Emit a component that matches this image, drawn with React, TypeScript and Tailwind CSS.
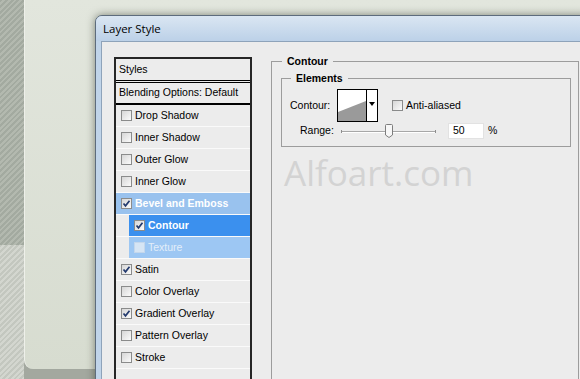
import React from 'react';

type RowKind = 'plain' | 'parent' | 'subActive' | 'sub';

interface StyleRow {
  label: string;
  checked: boolean;
  kind: RowKind;
}

const rows: StyleRow[] = [
  { label: 'Drop Shadow', checked: false, kind: 'plain' },
  { label: 'Inner Shadow', checked: false, kind: 'plain' },
  { label: 'Outer Glow', checked: false, kind: 'plain' },
  { label: 'Inner Glow', checked: false, kind: 'plain' },
  { label: 'Bevel and Emboss', checked: true, kind: 'parent' },
  { label: 'Contour', checked: true, kind: 'subActive' },
  { label: 'Texture', checked: false, kind: 'sub' },
  { label: 'Satin', checked: true, kind: 'plain' },
  { label: 'Color Overlay', checked: false, kind: 'plain' },
  { label: 'Gradient Overlay', checked: true, kind: 'plain' },
  { label: 'Pattern Overlay', checked: false, kind: 'plain' },
  { label: 'Stroke', checked: false, kind: 'plain' },
];

const CheckBox = ({ checked, faded }: { checked: boolean; faded?: boolean }) => (
  <span
    className={`w-[11px] h-[11px] shrink-0 border flex items-center justify-center ${
      faded
        ? 'border-[#c4d7ec] bg-[#d6e5f4]'
        : 'border-[#8a8b8b] bg-gradient-to-br from-[#d6d6d6] to-[#fbfbfb]'
    }`}
  >
    {checked && (
      <svg width="9" height="9" viewBox="0 0 9 9">
        <path d="M1.5 4.5 L3.5 6.8 L7.5 1.8" fill="none" stroke="#233a6e" strokeWidth="1.7" />
      </svg>
    )}
  </span>
);

const ListRow = ({ row }: { row: StyleRow }) => {
  if (row.kind === 'subActive' || row.kind === 'sub') {
    const active = row.kind === 'subActive';
    return (
      <div className="flex h-[22px] border-b border-[#fafafa]">
        <div className="w-[13px] bg-[#ececec]" />
        <div
          className={`flex-1 flex items-center pl-[5px] ${
            active ? 'bg-[#3b90ee] text-white font-bold' : 'bg-[#9dc7f3] text-[#e3eef9]'
          }`}
        >
          <CheckBox checked={row.checked} faded={!active} />
          <span className="ml-[3px]">{row.label}</span>
        </div>
      </div>
    );
  }
  const parent = row.kind === 'parent';
  return (
    <div
      className={`flex items-center h-[22px] pl-[5px] border-b border-[#fafafa] ${
        parent ? 'bg-[#99c2ee] text-white font-bold' : 'text-black'
      }`}
    >
      <CheckBox checked={row.checked} />
      <span className="ml-[3px]">{row.label}</span>
    </div>
  );
};

const ContourPreview = () => (
  <div className="w-[41px] h-[33px] border border-black bg-white flex">
    <svg width="28" height="31" viewBox="0 0 28 31" className="block">
      <polygon points="0,31 0,22 28,11 28,31" fill="#9a9a9a" />
    </svg>
    <div className="flex-1 border-l border-black flex justify-center pt-[12px]">
      <svg width="6" height="4" viewBox="0 0 6 4">
        <polygon points="0,0 6,0 3,4" fill="#000" />
      </svg>
    </div>
  </div>
);

const RangeSlider = () => (
  <svg width="97" height="16" viewBox="0 0 97 16" className="block">
    <line x1="1" y1="8.5" x2="96" y2="8.5" stroke="#a7a7a7" />
    <line x1="1" y1="9.5" x2="96" y2="9.5" stroke="#ffffff" />
    <line x1="1.5" y1="7" x2="1.5" y2="10" stroke="#8d8d8d" />
    <line x1="95.5" y1="7" x2="95.5" y2="10" stroke="#8d8d8d" />
    <path d="M45.5 2.5 Q45.5 1.5 46.5 1.5 L51.5 1.5 Q52.5 1.5 52.5 2.5 L52.5 12 L49 14.5 L45.5 12 Z" fill="#f7f7f7" stroke="#7d7d7d" />
  </svg>
);

export default function App() {
  return (
    <div className="relative w-[580px] h-[379px] overflow-hidden font-['Liberation_Sans',Arial,sans-serif] text-[10.5px]">
      <div className="flex h-full">
        <div className="w-[24px] flex flex-col">
          <div className="h-[245px] bg-[repeating-linear-gradient(135deg,#a3aaa0_0px,#a3aaa0_2px,#b3b9af_2px,#b3b9af_4px)]" />
          <div className="flex-1 bg-[repeating-linear-gradient(135deg,#c3c7bf_0px,#c3c7bf_2px,#d3d6cf_2px,#d3d6cf_4px)]" />
        </div>
        <div className="flex-1 flex flex-col bg-[#a3a89f]">
          <div className="flex-1 rounded-bl-[9px] border-l border-[#eef0ea] bg-gradient-to-b from-[#e2e6dd] to-[#d7dcd0]" />
          <div className="h-[10px]" />
        </div>
      </div>

      <div className="absolute left-[95px] top-[15px] w-[500px] h-[380px] rounded-tl-[7px] border border-[#5d6c7c] bg-[#c0d4e9] shadow-[0_0_9px_rgba(40,50,35,0.55)] flex flex-col overflow-hidden">
        <div className="h-[25px] shrink-0 bg-gradient-to-b from-[#dae6f2] to-[#bcd1e8] pl-[7px] flex items-center font-['Open_Sans',sans-serif] text-[11.5px] text-black">
          Layer Style
        </div>
        <div className="flex-1 flex pl-[5px]">
          <div className="flex-1 bg-[#ececec] border-l border-t border-[#8ea3ba] flex items-start pl-[12px] pt-[15px]">
            <div className="w-[138px] shrink-0 border-2 border-[#262626] text-black">
              <div className="h-[22px] flex items-center pl-[3px] border-b border-black">Styles</div>
              <div className="h-[1px]" />
              <div className="h-[23px] flex items-center pl-[3px] border-t border-black border-b-2">
                Blending Options: Default
              </div>
              {rows.map((r) => (
                <ListRow key={r.label} row={r} />
              ))}
              <div className="h-[60px]" />
            </div>

            <fieldset className="ml-[19px] -mt-[2px] w-[308px] h-[400px] shrink-0 border border-[#9c9c9c] p-0">
              <legend className="ml-[10px] px-[5px] font-bold leading-[13px] text-black">Contour</legend>
              <fieldset className="ml-[9px] mr-[7px] mt-[4px] border border-[#9c9c9c] pb-[7px]">
                <legend className="ml-[9px] px-[5px] font-bold leading-[13px] text-black">Elements</legend>
                <div className="flex items-center pl-[8px] pt-[4px]">
                  <span className="w-[47px]">Contour:</span>
                  <ContourPreview />
                  <span className="ml-[14px]">
                    <CheckBox checked={false} />
                  </span>
                  <span className="ml-[3px]">Anti-aliased</span>
                </div>
                <div className="flex items-center pl-[18px] mt-[1px] h-[16px]">
                  <span className="w-[40px]">Range:</span>
                  <RangeSlider />
                  <div className="ml-[11px] w-[36px] h-[16px] bg-white border border-[#e2e2e2] pl-[4px] flex items-center">50</div>
                  <span className="ml-[4px]">%</span>
                </div>
              </fieldset>
              <div className="ml-[12px] mt-[8px] font-['Open_Sans',sans-serif] text-[35px] leading-none text-[#d3d3d3]">
                Alfoart.com
              </div>
            </fieldset>
          </div>
        </div>
      </div>
    </div>
  );
}
